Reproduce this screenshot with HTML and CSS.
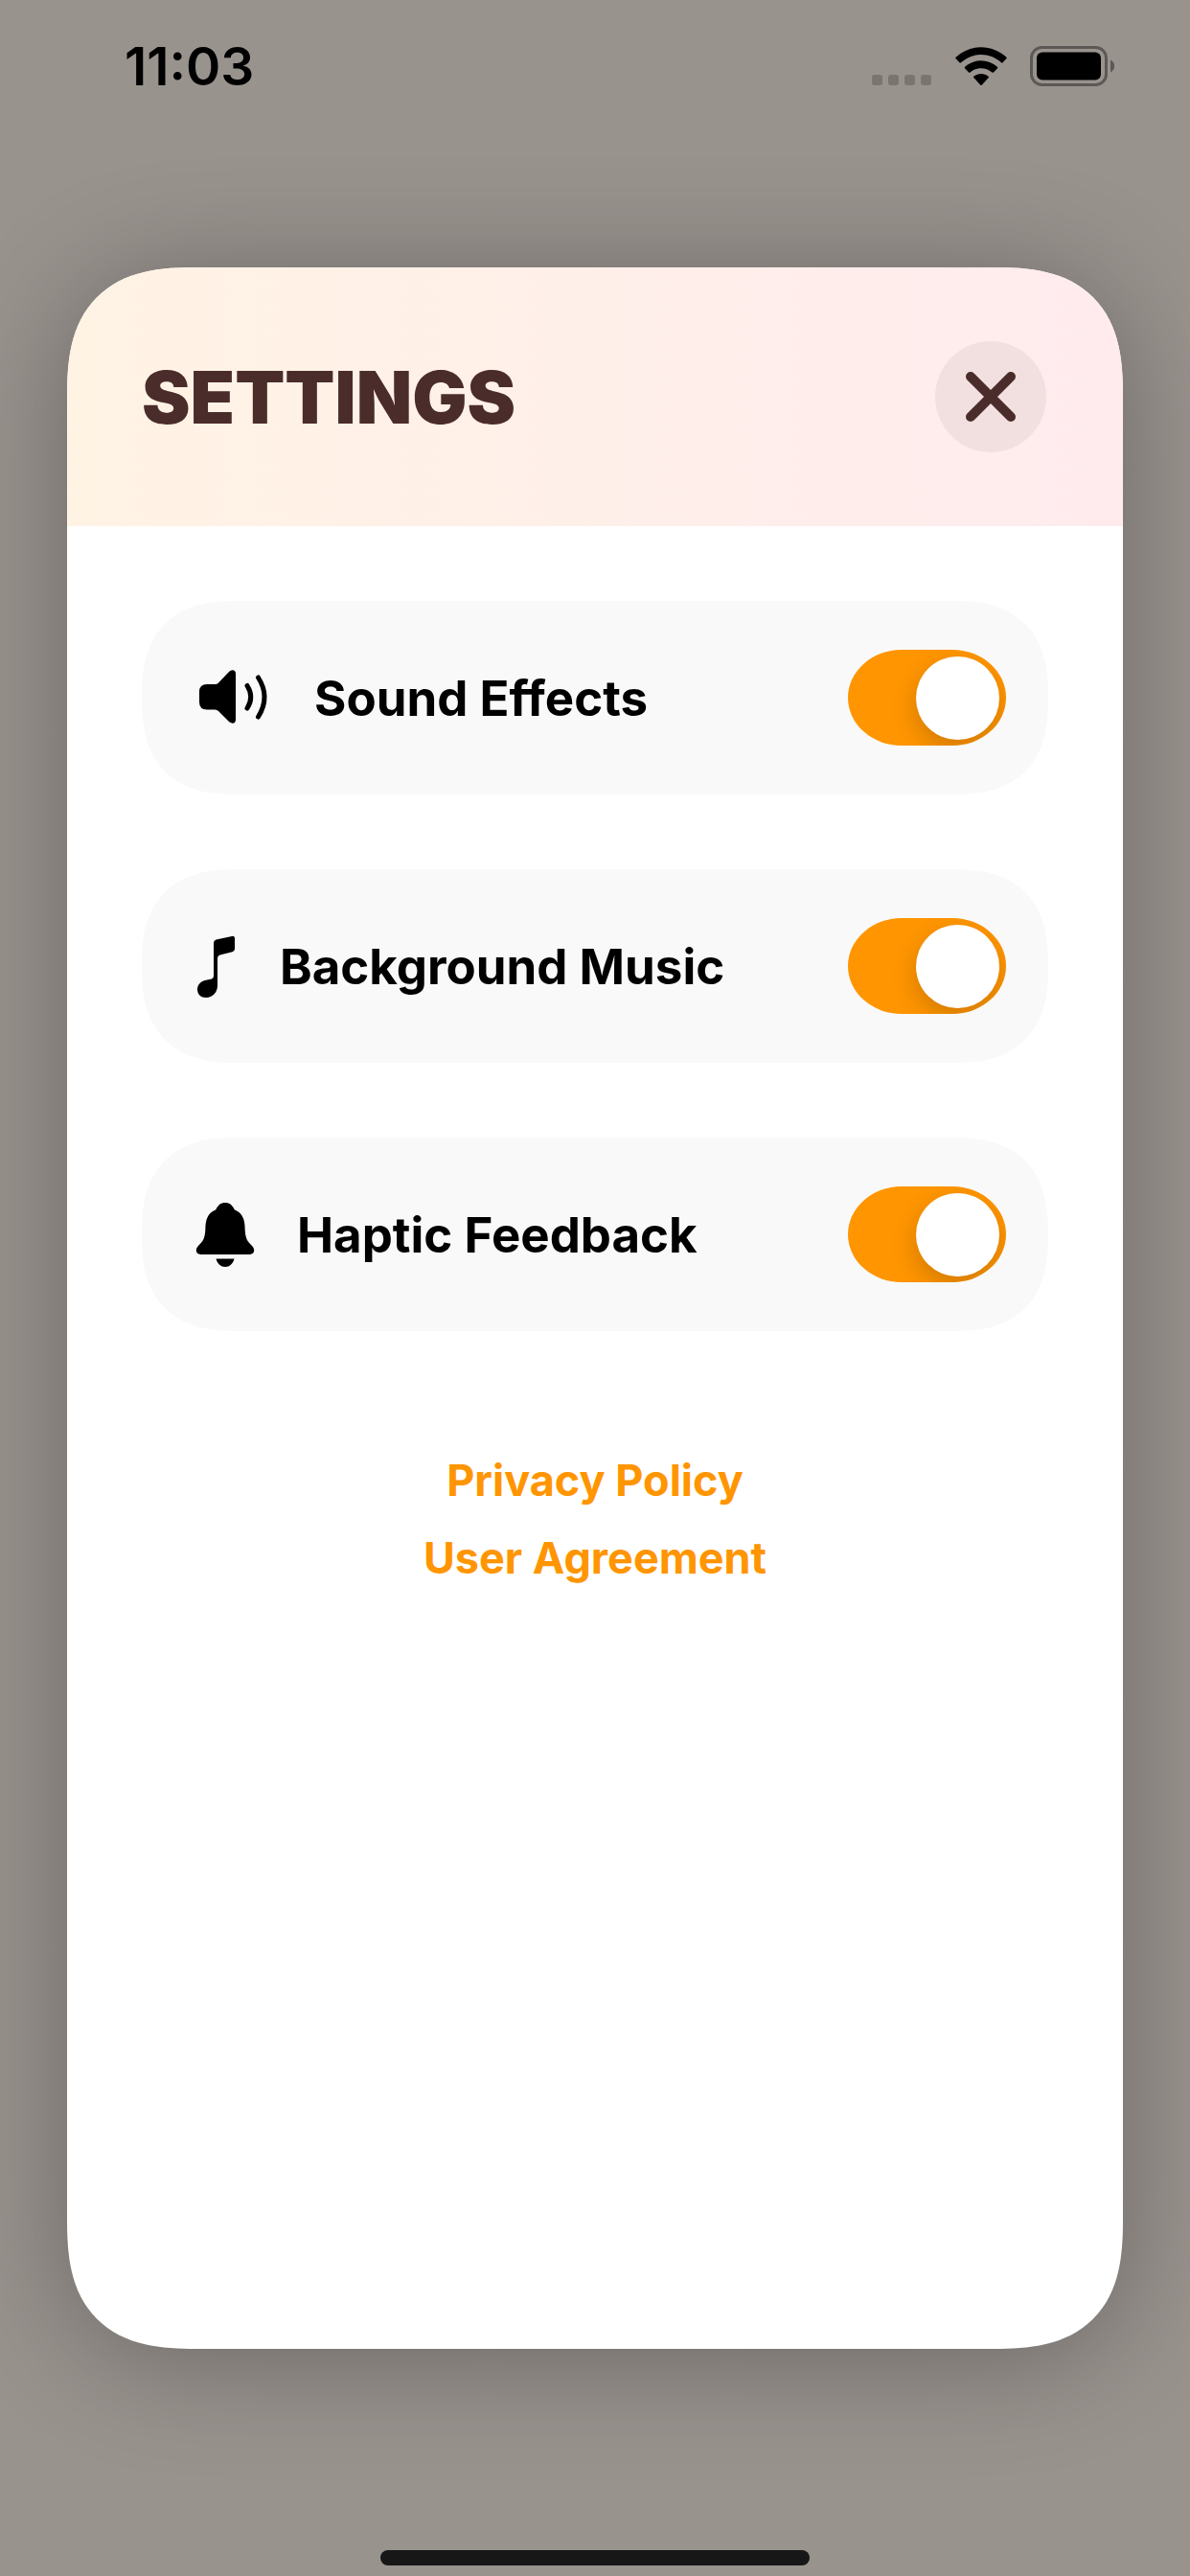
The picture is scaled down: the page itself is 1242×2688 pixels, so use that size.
FILE: index.html
```html
<!DOCTYPE html>
<html lang="en">
<head>
  <meta charset="UTF-8" />
  <meta name="viewport" content="width=device-width, initial-scale=1.0" />
  <title>Settings</title>
  <link rel="stylesheet" href="styles.css">
</head>
<body>
  <header class="status-bar">
    <span class="clock">11:03</span>
    <div class="status-icons">
      <svg class="signal" width="64" height="12" viewBox="0 0 64 12" aria-hidden="true">
        <rect x="1" y="0" width="11" height="11" rx="3"/>
        <rect x="18" y="0" width="11" height="11" rx="3"/>
        <rect x="35" y="0" width="11" height="11" rx="3"/>
        <rect x="52" y="0" width="11" height="11" rx="3"/>
      </svg>
      <svg width="54" height="41" viewBox="0 0 54 41" aria-hidden="true">
        <path d="M0.4 12.1Q0 11.4 0.6 10.8C15.5 -3.3 38.5 -3.3 53.4 10.8Q54 11.4 53.5 12.1L49.6 16.3Q48.8 17 48 16.3C36.2 5.3 17.8 5.3 6 16.3Q5.200 17 4.500 16.300Z"/>
        <path d="M10 22.200Q9.400 21.500 10.100 20.800C19.600 12 34.400 12 43.900 20.800Q44.600 21.500 44 22.200L40 26.400Q39.200 27.100 38.400 26.400C32 20.700 22 20.700 15.600 26.400Q14.800 27.100 14 26.400Z"/>
        <path d="M19.300 32.100Q18.600 31.400 19.400 30.700C23.800 27 30.200 27 34.600 30.700Q35.400 31.400 34.700 32.100L27.700 39.700Q27 40.400 26.300 39.700Z"/>
      </svg>
      <svg width="89" height="42" viewBox="0 0 89 42" aria-hidden="true">
        <rect class="battery-shell" x="1.500" y="1.500" width="78" height="39" rx="11"/>
        <rect x="7" y="6.500" width="67" height="29" rx="6"/>
        <path class="battery-cap" d="M84 14.500C89.500 17 89.500 25 84 27.500Z"/>
      </svg>
    </div>
  </header>

  <main class="stage">
    <section class="card" role="dialog" aria-labelledby="settingsTitle">
      <div class="card-header">
        <h1 id="settingsTitle">SETTINGS</h1>
        <button class="close" type="button" aria-label="Close">
          <svg width="52" height="52" viewBox="0 0 52 52" aria-hidden="true">
            <path d="M5 5L47 47M47 5L5 47"/>
          </svg>
        </button>
      </div>

      <div class="card-body">
        <div class="row">
          <label for="sound">
            <svg width="89" height="78" viewBox="0 0 89 78" aria-hidden="true">
              <path d="M8 33Q8 25 16 25H24.500Q26.500 25 28 23.500L38.500 12.500C42 9 46 10 46 14V62C46 66 42 67 38.500 63.500L28 53Q26.500 51.500 24.500 51.500H16Q8 51.500 8 43.500Z"/>
              <path class="wave" d="M58 26.500Q65.500 38.300 58 50M69.500 18Q82.500 38.300 69.500 59"/>
            </svg>
            <span>Sound Effects</span>
          </label>
          <input type="checkbox" class="toggle" id="sound" role="switch" checked>
        </div>

        <div class="row">
          <label for="music">
            <svg width="53" height="78" viewBox="0 0 53 78" aria-hidden="true">
              <path d="M25.500 11.500Q23 12.200 23 15V49Q23 52 20 52.700L15 53.800C9.500 55 6 58.500 6 63.500C6 68.500 9.800 72 15 72C22 72 27 66.500 27 59V31Q27 28.200 29.500 27.500L42.500 24.300Q45 23.600 45 21V10.500Q45 7.200 42 7.900Z"/>
            </svg>
            <span>Background Music</span>
          </label>
          <input type="checkbox" class="toggle" id="music" role="switch" checked>
        </div>

        <div class="row">
          <label for="haptic">
            <svg width="71" height="78" viewBox="0 0 71 78" aria-hidden="true">
              <path d="M9.500 60C4 60 3.500 54.500 7 51C11.500 46.500 14 43.500 14.300 34C14.500 22 17.500 16.500 25.300 13.300C27.300 8.500 30.500 6 35 6C39.500 6 42.700 8.500 44.700 13.300C52.500 16.500 55.500 22 55.700 34C56 43.500 58.500 46.500 63 51C66.500 54.500 66 60 60.500 60Z"/>
              <path d="M25.500 64.500H44.500C43 70 39.500 73 35 73C30.500 73 27 70 25.500 64.500Z"/>
            </svg>
            <span>Haptic Feedback</span>
          </label>
          <input type="checkbox" class="toggle" id="haptic" role="switch" checked>
        </div>

        <nav class="links">
          <a href="#privacy">Privacy Policy</a>
          <a href="#agreement">User Agreement</a>
        </nav>
      </div>
    </section>
  </main>

  <footer class="home-area">
    <div class="home-indicator"></div>
  </footer>
</body>
</html>
```
FILE: styles.css
```css
* {
  box-sizing: border-box;
}
body {
  margin: 0;
  min-height: 100vh;
  display: flex;
  flex-direction: column;
  background: #99938e;
  color: #000;
  font-family: Inter, "Liberation Sans", sans-serif;
}

/* status bar */
.status-bar {
  display: flex;
  justify-content: space-between;
  align-items: center;
  height: 138px;
  padding: 0 78px 0 130px;
}
.clock {
  font-size: 55px;
  font-weight: 600;
}
.status-icons {
  display: flex;
  align-items: flex-end;
  gap: 24px;
}
.signal {
  fill: #7b7571;
}
.battery-shell {
  fill: none;
  stroke: #5c5855;
  stroke-width: 3;
}
.battery-cap {
  fill: #5c5855;
}

/* settings card */
.stage {
  flex: 1;
  display: flex;
  padding: 141px 70px 210px;
}
.card {
  flex: 1;
  border-radius: 98px;
  background: #fff;
  box-shadow: 0 10px 120px rgba(0, 0, 0, 0.3);
  overflow: hidden;
}
.card-header {
  display: flex;
  justify-content: space-between;
  align-items: center;
  height: 270px;
  padding: 0 80px 0 78px;
  background: linear-gradient(to right, #fff3e4, #ffebee);
}
.card-header h1 {
  margin: 0;
  color: #4a2c2a;
  font-size: 76px;
  font-weight: 900;
}
.close {
  display: grid;
  place-items: center;
  width: 116px;
  height: 116px;
  padding: 0;
  border: 0;
  border-radius: 50%;
  background: rgba(0, 0, 0, 0.05);
  cursor: pointer;
}
.close path {
  fill: none;
  stroke: #4a2c2a;
  stroke-width: 10;
  stroke-linecap: round;
}
.card-body {
  display: flex;
  flex-direction: column;
  gap: 78px;
  padding: 78px;
}
.row {
  display: flex;
  justify-content: space-between;
  align-items: center;
  height: 202px;
  padding: 0 44px 0 52px;
  border-radius: 72px;
  background: #f9f9f9;
}
.row label {
  display: flex;
  align-items: center;
  gap: 39px;
  font-size: 51px;
  font-weight: 700;
}
.wave {
  fill: none;
  stroke: #000;
  stroke-width: 5;
  stroke-linecap: round;
}
.toggle {
  appearance: none;
  display: flex;
  align-items: center;
  width: 165px;
  height: 100px;
  margin: 0;
  padding: 0 7px;
  border-radius: 56px / 50px;
  background: #e9e9ea;
  overflow: hidden;
  cursor: pointer;
}
.toggle::before {
  content: "";
  width: 87px;
  height: 87px;
  border-radius: 50%;
  background: #fff;
  box-shadow: 0 10px 26px rgba(0, 0, 0, 0.18);
}
.toggle:checked {
  justify-content: flex-end;
  background: #ff9500;
}
.links {
  display: flex;
  flex-direction: column;
  align-items: center;
  gap: 26px;
  padding-top: 50px;
  font-size: 45px;
  font-weight: 700;
  line-height: 55px;
}
.links a {
  color: #ff9500;
  text-decoration: none;
}

/* home indicator */
.home-area {
  display: flex;
  justify-content: center;
  padding-bottom: 11px;
}
.home-indicator {
  width: 36%;
  height: 16px;
  border-radius: 8px;
  background: #171717;
}

/* smoother corners where the browser has them */
@supports (corner-shape: squircle) {
  .card {
    border-radius: 135px;
    corner-shape: superellipse(1.4);
  }
  .row {
    border-radius: 101px;
    corner-shape: superellipse(1.35);
  }
}
```
